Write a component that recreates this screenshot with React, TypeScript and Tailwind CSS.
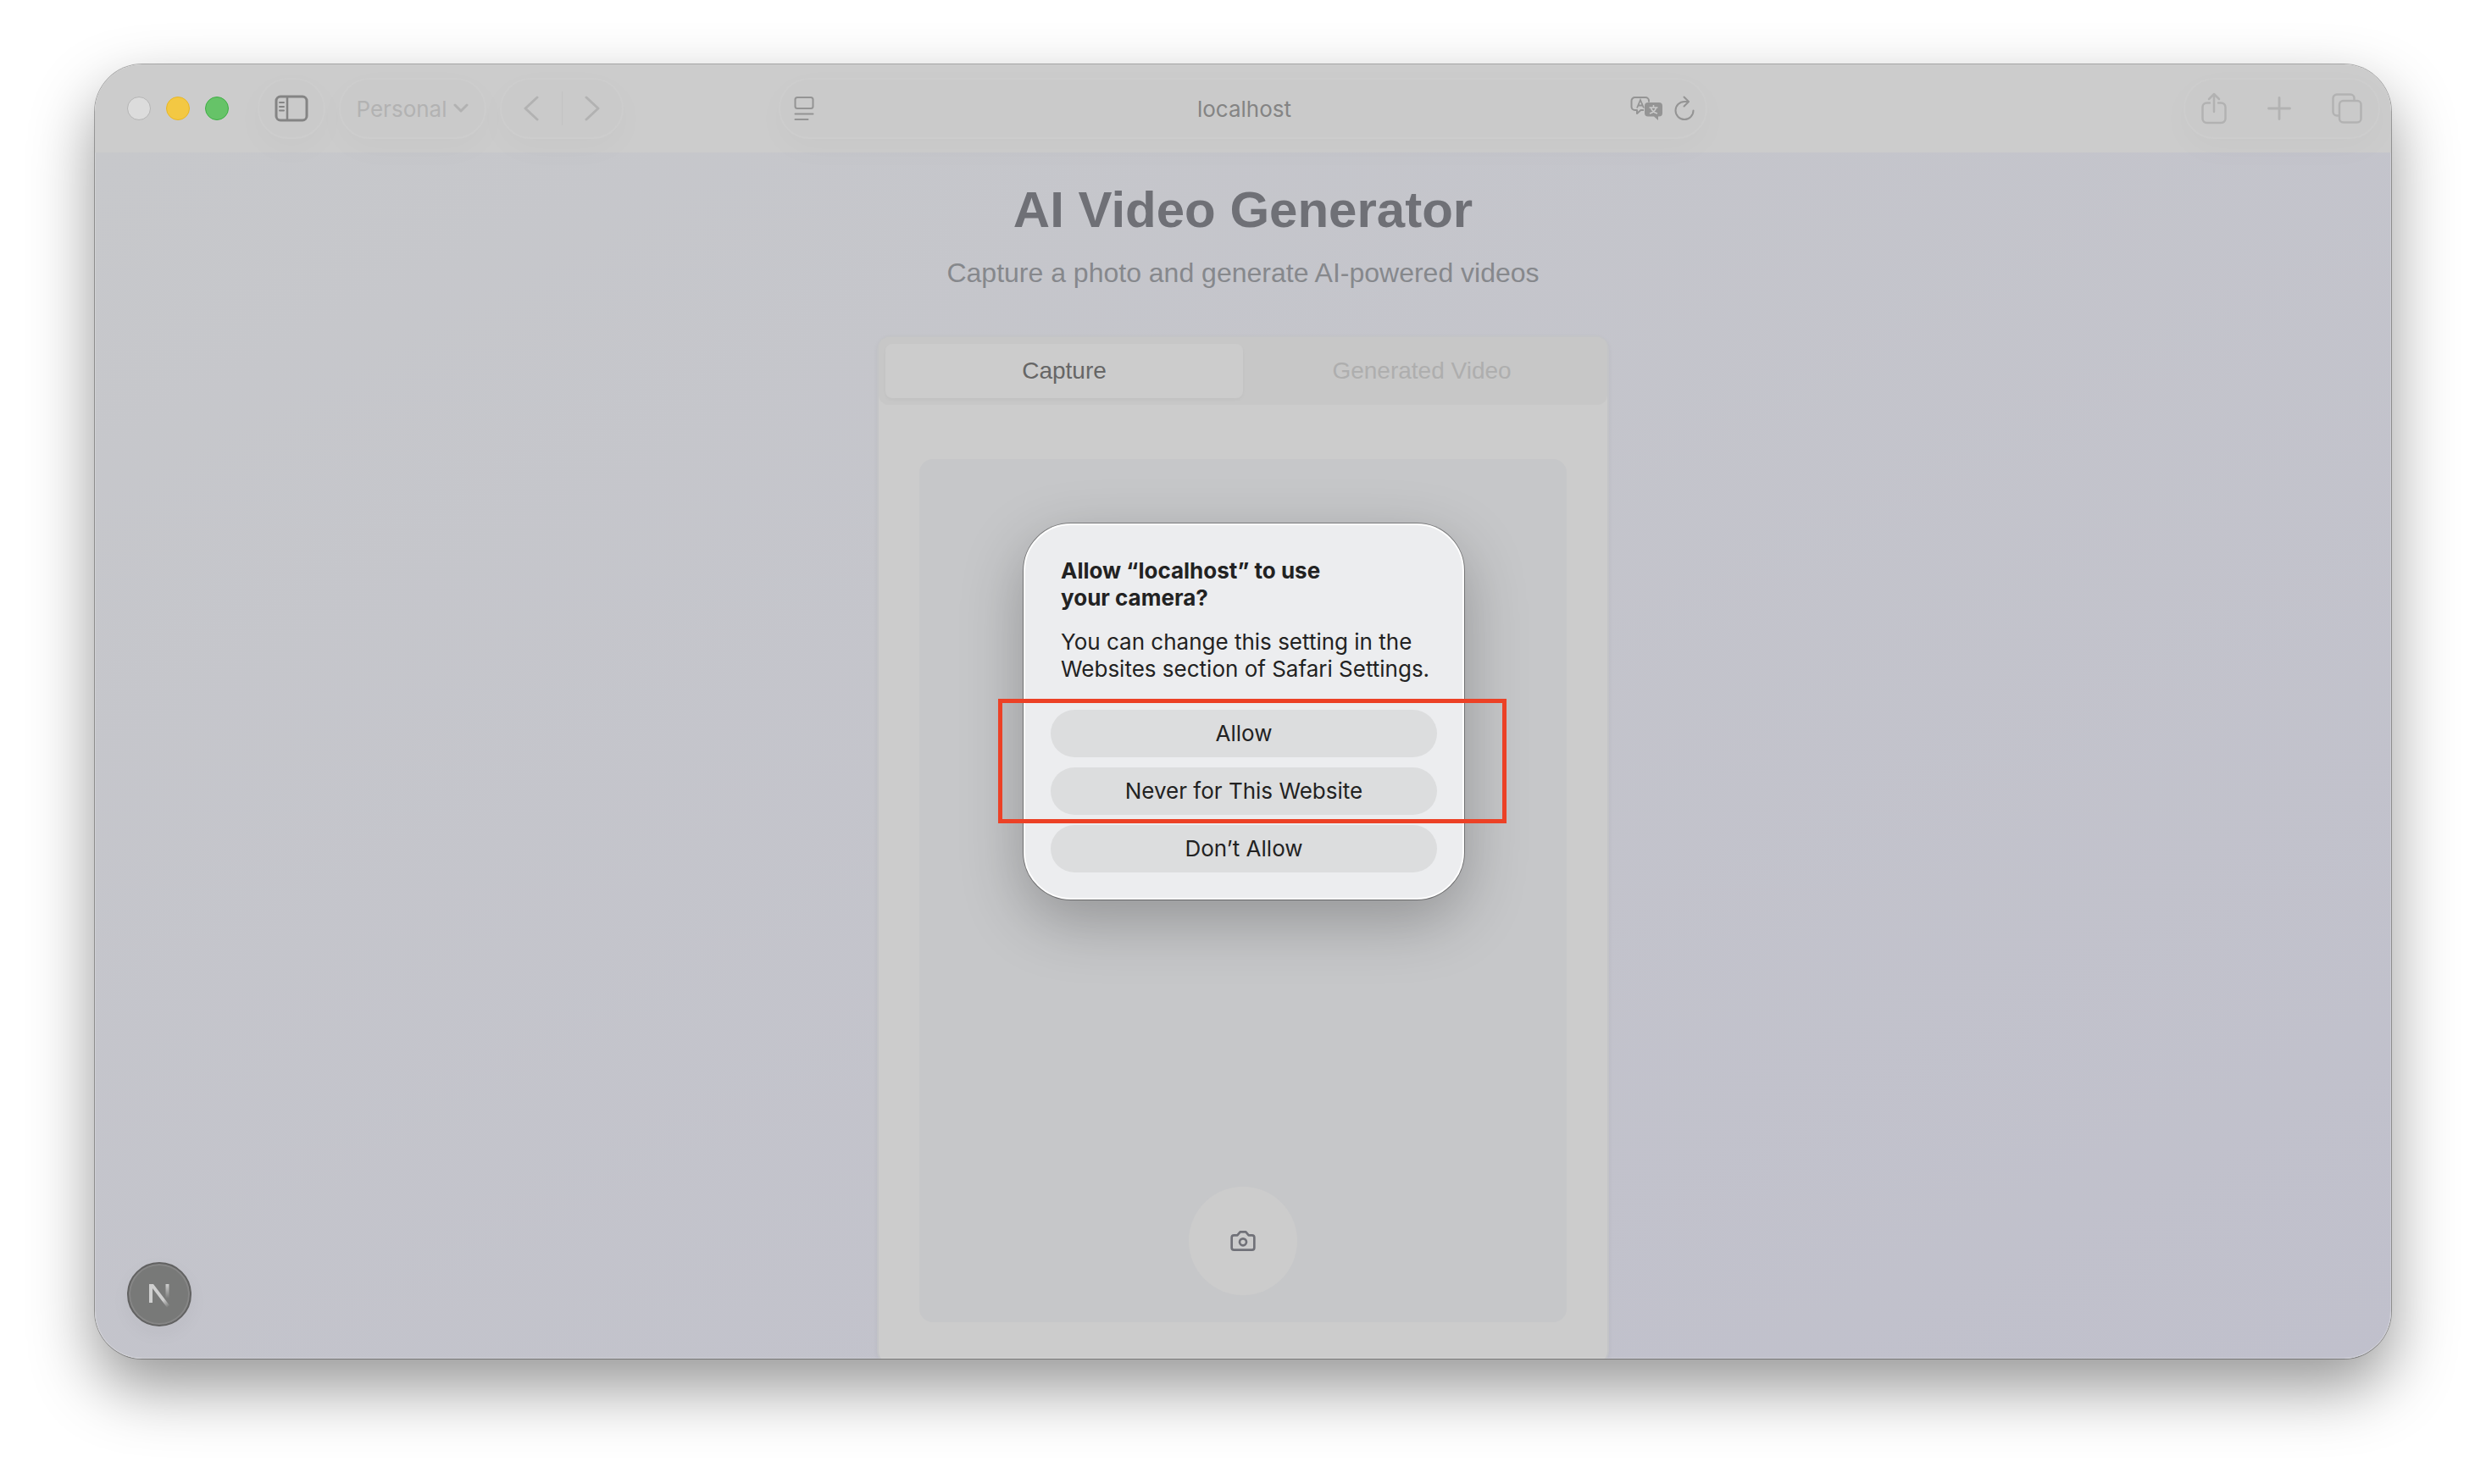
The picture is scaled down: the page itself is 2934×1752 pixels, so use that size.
import React from "react";

const SYSTEM_FONT = "font-['Inter','Noto_Sans',sans-serif]";
const PAGE_FONT = "font-['Liberation_Sans',Arial,sans-serif]";

function SidebarIcon() {
  return (
    <svg width="40" height="32" viewBox="0 0 40 32" fill="none" stroke="currentColor" strokeWidth="3" aria-hidden="true">
      <rect x="2" y="2" width="36" height="28" rx="5" />
      <path d="M15 2v28" strokeWidth="2.5" />
      <path d="M6 9h5M6 14h5M6 18.5h5" strokeWidth="2" strokeLinecap="round" />
    </svg>
  );
}

function ReaderIcon() {
  return (
    <svg width="24" height="30" viewBox="0 0 24 30" fill="none" stroke="currentColor" strokeWidth="2" strokeLinecap="round" aria-hidden="true">
      <rect x="1.5" y="2" width="21" height="13" rx="2.5" />
      <path d="M1.5 21.5h21M1.5 28h15" />
    </svg>
  );
}

function TranslateIcon() {
  return (
    <svg width="40" height="30" viewBox="0 0 40 30" fill="none" aria-hidden="true">
      <path
        d="M16 17h-3.500l-4.500 4v-4H5.500a4 4 0 0 1-4-4V6a4 4 0 0 1 4-4h12.500a4 4 0 0 1 4 4v1.500"
        stroke="currentColor"
        strokeWidth="2"
        strokeLinejoin="round"
      />
      <path d="M8 14.500 12 5l4 9.500M9.500 11.500h5" stroke="currentColor" strokeWidth="1.8" />
      <path d="M21 8h13a4 4 0 0 1 4 4v8.500a4 4 0 0 1-4 4h-1V29l-5-4.500h-7a4 4 0 0 1-4-4V12a4 4 0 0 1 4-4Z" fill="currentColor" />
      <path d="M27.500 11v2.500M22.500 14h10M24.500 14.500c1 3 4 5.500 7.500 6.500M30.500 14.500c-1 3-4 5.500-7.500 6.500" stroke="#cacaca" strokeWidth="1.600" />
    </svg>
  );
}

function ReloadIcon() {
  return (
    <svg width="24" height="30" viewBox="0 0 24 30" fill="none" stroke="currentColor" strokeWidth="2" strokeLinecap="round" strokeLinejoin="round" aria-hidden="true">
      <path d="M22.500 17.500a10.500 10.500 0 1 1-10.500-10.500h4.500" />
      <path d="M11.500 1.500 17 7l-5.500 5.500" />
    </svg>
  );
}

function ShareIcon() {
  return (
    <svg width="30" height="38" viewBox="0 0 30 38" fill="none" stroke="currentColor" strokeWidth="2.500" strokeLinecap="round" strokeLinejoin="round" aria-hidden="true">
      <path d="M10 12.500H6.500a5 5 0 0 0-5 5V31a5 5 0 0 0 5 5h17a5 5 0 0 0 5-5V17.500a5 5 0 0 0-5-5H20" />
      <path d="M15 23V2M9 8l6-6 6 6" />
    </svg>
  );
}

function PlusIcon() {
  return (
    <svg width="28" height="28" viewBox="0 0 28 28" fill="none" stroke="currentColor" strokeWidth="2.800" strokeLinecap="round" aria-hidden="true">
      <path d="M14 1.500v25M1.500 14h25" />
    </svg>
  );
}

function TabsIcon() {
  return (
    <svg width="36" height="36" viewBox="0 0 36 36" fill="none" stroke="currentColor" strokeWidth="2.500" aria-hidden="true">
      <path d="M9 26.500H6a4.500 4.500 0 0 1-4.500-4.500V6A4.500 4.500 0 0 1 6 1.500h16A4.500 4.500 0 0 1 26.500 6v3" />
      <rect x="9" y="9" width="25.500" height="25.500" rx="4.500" />
    </svg>
  );
}

function Chevron({ d, width, height, stroke }: { d: string; width: number; height: number; stroke: number }) {
  return (
    <svg width={width} height={height} viewBox={`0 0 ${width} ${height}`} fill="none" stroke="currentColor" strokeWidth={stroke} strokeLinecap="round" strokeLinejoin="round" aria-hidden="true">
      <path d={d} />
    </svg>
  );
}

function CameraIcon() {
  return (
    <svg width="32" height="32" viewBox="0 0 24 24" fill="none" stroke="currentColor" strokeWidth="2" strokeLinecap="round" strokeLinejoin="round" aria-hidden="true">
      <path d="M14.500 4h-5L7 7H4a2 2 0 0 0-2 2v9a2 2 0 0 0 2 2h16a2 2 0 0 0 2-2V9a2 2 0 0 0-2-2h-3l-2.500-3z" />
      <circle cx="12" cy="13" r="3" />
    </svg>
  );
}

function FrameworkLogo() {
  return (
    <svg width="26" height="32" viewBox="0 -3 26 32" fill="none" aria-hidden="true">
      <defs>
        <linearGradient id="diagonal" x1="13" y1="14" x2="24" y2="28" gradientUnits="userSpaceOnUse">
          <stop offset="0" stopColor="#cfcfcf" />
          <stop offset="0.400" stopColor="#cfcfcf" />
          <stop offset="1" stopColor="#cfcfcf" stopOpacity="0" />
        </linearGradient>
        <linearGradient id="stem" x1="22" y1="1" x2="22" y2="18" gradientUnits="userSpaceOnUse">
          <stop offset="0" stopColor="#cfcfcf" />
          <stop offset="1" stopColor="#cfcfcf" stopOpacity="0" />
        </linearGradient>
      </defs>
      <path d="M1 1h5l19 25-3 2.500L5 6v17H1Z" fill="url(#diagonal)" />
      <path d="M20.500 1h4v17h-4Z" fill="url(#stem)" />
    </svg>
  );
}

const PILL =
  "flex h-[72px] items-center rounded-full border-2 border-[#cdcdcd] bg-[#cacaca] shadow-[0_12px_40px_rgba(0,0,0,0.025)]";

function Toolbar() {
  return (
    <header
      className={`${SYSTEM_FONT} relative z-10 grid h-[104px] shrink-0 grid-cols-[1fr_minmax(0,1096px)_1fr] items-center bg-[#cccccc] text-[26px] text-[#b2b2b2]`}
    >
      <div className="flex items-center pl-[38px]">
        <div className="flex gap-[18px]">
          <button aria-label="Close" className="size-7 rounded-full border border-[#b4b4b4] bg-[#dcdcdc]" />
          <button aria-label="Minimize" className="size-7 rounded-full border border-[#e8b624] bg-[#f3c843]" />
          <button aria-label="Zoom" className="size-7 rounded-full border border-[#3fae45] bg-[#66c368]" />
        </div>
        <button aria-label="Show sidebar" className={`${PILL} ml-[34px] w-20 justify-center text-[#848484]`}>
          <SidebarIcon />
        </button>
        <button className={`${PILL} ml-4 w-[174px] justify-center gap-2`}>
          Personal
          <Chevron d="M2 2 9 9l7-7" width={18} height={12} stroke={3} />
        </button>
        <div className={`${PILL} ml-4 w-[146px] justify-between px-[26px]`}>
          <button aria-label="Back">
            <Chevron d="M16 2 2 15l14 13" width={18} height={30} stroke={3} />
          </button>
          <span className="h-10 w-px bg-[#c3c3c3]" />
          <button aria-label="Forward">
            <Chevron d="m2 2 14 13L2 28" width={18} height={30} stroke={3} />
          </button>
        </div>
      </div>
      <div className={`${PILL} justify-between pl-4 pr-[13px] text-[#949494]`}>
        <button aria-label="Reader" className="w-[76px]">
          <ReaderIcon />
        </button>
        <span className="text-[#848484]">localhost</span>
        <div className="flex gap-3">
          <button aria-label="Translate">
            <TranslateIcon />
          </button>
          <button aria-label="Reload">
            <ReloadIcon />
          </button>
        </div>
      </div>
      <div className={`${PILL} mr-[13px] w-[232px] justify-between justify-self-end px-[19px]`}>
        <button aria-label="Share">
          <ShareIcon />
        </button>
        <button aria-label="New tab">
          <PlusIcon />
        </button>
        <button aria-label="Tab overview">
          <TabsIcon />
        </button>
      </div>
    </header>
  );
}

function GeneratorPage() {
  return (
    <main
      className={`${PAGE_FONT} relative flex min-h-0 flex-1 flex-col items-center overflow-hidden bg-linear-to-br from-[#c7c8cb] to-[#c0c0cc] pt-8`}
    >
      <h1 className="text-[60px]/[72px] font-bold text-[#6f7076]">AI Video Generator</h1>
      <p className="mt-[14px] text-[32px]/[48px] text-[#86888c]">Capture a photo and generate AI-powered videos</p>
      <section className="mt-[50px] w-full max-w-[864px] rounded-2xl border-2 border-[#c3c4c7] bg-[#cccccc] shadow-[0_2px_6px_rgba(0,0,0,0.04)]">
        <div role="tablist" className="grid grid-cols-2 rounded-xl bg-[#c7c7c7] p-2 text-[28px]/[40px]">
          <button role="tab" aria-selected="true" className="rounded-lg bg-[#cccccc] py-3 text-[#666666] shadow-[0_2px_4px_rgba(0,0,0,0.03)]">
            Capture
          </button>
          <button role="tab" aria-selected="false" className="py-3 text-[#aeaeae]">
            Generated Video
          </button>
        </div>
        <div className="mt-4 p-12">
          <div className="flex aspect-3/4 items-end justify-center rounded-2xl bg-[#c6c7c9] pb-8">
            <button aria-label="Take photo" className="flex size-32 items-center justify-center rounded-full bg-[#cccccc] text-[#707178]">
              <CameraIcon />
            </button>
          </div>
        </div>
      </section>
      <button
        aria-label="Open developer tools"
        className="absolute bottom-[38px] left-[38px] flex size-19 items-center justify-center rounded-full border-2 border-[#626262] bg-[#787978] shadow-[inset_0_0_0_2px_#868686,0_8px_24px_rgba(0,0,0,0.04)]"
      >
        <FrameworkLogo />
      </button>
    </main>
  );
}

const DIALOG_BUTTON = "h-14 w-full rounded-full bg-[#dcddde]";

function PermissionDialog() {
  return (
    <div className={`${SYSTEM_FONT} absolute inset-0 z-20 flex items-center justify-center pl-0.5`}>
      <div
        role="dialog"
        aria-labelledby="dialog-title"
        className="w-[520px] rounded-[56px] border-2 border-white bg-[#ecedef] px-[30px] pb-[30px] pt-[38px] text-[26px]/[32px] text-[#222222] shadow-[0_0_0_1px_rgba(0,0,0,0.35),0_24px_72px_rgba(0,0,0,0.26)]"
      >
        <div className="px-3">
          <h2 id="dialog-title" className="font-bold">
            Allow “localhost” to use
            <br />
            your camera?
          </h2>
          <p className="mt-5 whitespace-nowrap">
            You can change this setting in the
            <br />
            Websites section of Safari Settings.
          </p>
        </div>
        <div className="relative mt-8 flex flex-col gap-3">
          <button className={DIALOG_BUTTON}>Allow</button>
          <button className={DIALOG_BUTTON}>Never for This Website</button>
          <span className="pointer-events-none absolute -bottom-[10px] -left-[62px] -right-[82px] -top-[13px] border-[5px] border-[#ec4126]" />
        </div>
        <button className={`${DIALOG_BUTTON} mt-3`}>Don’t Allow</button>
      </div>
    </div>
  );
}

export default function App() {
  return (
    <div className="flex h-screen flex-col bg-white px-28 pb-37 pt-19">
      <div className="relative flex min-h-0 flex-1 flex-col rounded-[56px] shadow-[0_0_0_1px_rgba(0,0,0,0.3),0_34px_76px_rgba(0,0,0,0.41)]">
        <div className="flex min-h-0 flex-1 flex-col overflow-hidden rounded-[56px]">
          <Toolbar />
          <GeneratorPage />
        </div>
        <PermissionDialog />
        <div className="pointer-events-none absolute inset-0 rounded-[56px] border border-white/20" />
      </div>
    </div>
  );
}
